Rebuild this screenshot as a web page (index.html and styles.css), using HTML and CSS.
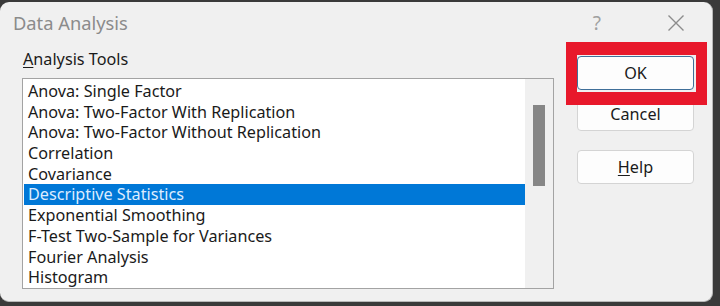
FILE: index.html
```html
<!DOCTYPE html>
<html>
<head>
<meta charset="utf-8">
<link rel="stylesheet" href="styles.css">
</head>
<body>
<div class="dialog">
  <div class="titlebar">
    <span class="title">Data Analysis</span>
    <div class="title-actions">
      <span class="help-q">?</span>
      <svg class="close" width="18" height="18" viewBox="0 0 18 18"><path d="M1.5 1.5 L16.5 16.5 M16.5 1.5 L1.5 16.5" stroke="#8c8c8c" stroke-width="1.4" fill="none"/></svg>
    </div>
  </div>
  <div class="body">
    <div class="left">
      <div class="label"><u>A</u>nalysis Tools</div>
      <div class="listbox">
        <ul class="items">
          <li>Anova: Single Factor</li>
          <li>Anova: Two-Factor With Replication</li>
          <li>Anova: Two-Factor Without Replication</li>
          <li>Correlation</li>
          <li>Covariance</li>
          <li class="selected">Descriptive Statistics</li>
          <li>Exponential Smoothing</li>
          <li>F-Test Two-Sample for Variances</li>
          <li>Fourier Analysis</li>
          <li>Histogram</li>
        </ul>
        <div class="scrollbar"><div class="thumb"></div></div>
      </div>
    </div>
    <div class="right">
      <div class="ok-wrap">
        <button class="btn default">OK</button>
        <div class="annot"></div>
      </div>
      <button class="btn">Cancel</button>
      <button class="btn help"><u>H</u>elp</button>
    </div>
  </div>
</div>
</body>
</html>
```
FILE: styles.css
```css
* { box-sizing: border-box; }
html, body { margin: 0; padding: 0; }
body {
  width: 720px;
  height: 306px;
  background: #3a3a3a;
  font-family: "Noto Sans", "Open Sans", sans-serif;
  overflow: hidden;
}
.dialog {
  margin-top: 2px;
  width: 713px;
  height: 300px;
  background: #f0f0f0;
  border-radius: 9px;
  border-right: 1px solid #b8b8b8;
  border-bottom: 1px solid #b8b8b8;
  display: flex;
  flex-direction: column;
}
.titlebar {
  height: 38px;
  display: flex;
  align-items: center;
  justify-content: space-between;
  padding: 0 27px 0 13px;
}
.title {
  font-size: 18.3px;
  color: #8b8b8b;
  padding-top: 3px;
}
.title-actions {
  display: flex;
  align-items: center;
  gap: 66px;
  padding-top: 4px;
}
.help-q {
  font-size: 19px;
  color: #a0a0a0;
  line-height: 1;
}
.close { display: block; }
.body {
  display: flex;
  padding: 0 0 0 22px;
}
.left {
  width: 532px;
}
.label {
  font-size: 16.2px;
  color: #1a1a1a;
  height: 38px;
  padding-top: 9px;
  padding-left: 1px;
  line-height: 20px;
}
.label u, .help u { text-decoration-thickness: 1px; text-underline-offset: 2px; }
.listbox {
  height: 211px;
  border: 1px solid #a3a3a3;
  background: #ffffff;
  display: flex;
}
.items {
  list-style: none;
  margin: 0;
  padding: 2px 0 0 1px;
  flex: 1;
}
.items li {
  height: 20.7px;
  line-height: 20.7px;
  font-size: 16.2px;
  color: #1a1a1a;
  padding-left: 4px;
  white-space: nowrap;
}
.items li.selected {
  background: #0078d7;
  color: #dcecff;
}
.scrollbar {
  width: 28px;
  background: #f0f0f0;
  padding: 26px 0 0 8px;
}
.thumb {
  width: 12px;
  height: 81px;
  background: #868686;
}
.right {
  display: flex;
  flex-direction: column;
  padding-left: 23px;
  padding-top: 16px;
}
.btn {
  width: 117px;
  height: 34px;
  background: #fdfdfd;
  border: 1px solid #d4d4d4;
  border-radius: 4px;
  font-family: "Noto Sans", "Open Sans", sans-serif;
  font-size: 16.2px;
  color: #1a1a1a;
  padding: 0;
}
.btn.default {
  border-color: #3f6f99;
}
.ok-wrap {
  position: relative;
  margin-bottom: 7px;
}
.annot {
  position: absolute;
  left: -11px;
  top: -14px;
  width: 141px;
  height: 63px;
  border: 11px solid #e8182b;
  border-top-width: 13px;
  border-bottom-width: 13px;
  pointer-events: none;
}
.help {
  margin-top: 19px;
}
```
